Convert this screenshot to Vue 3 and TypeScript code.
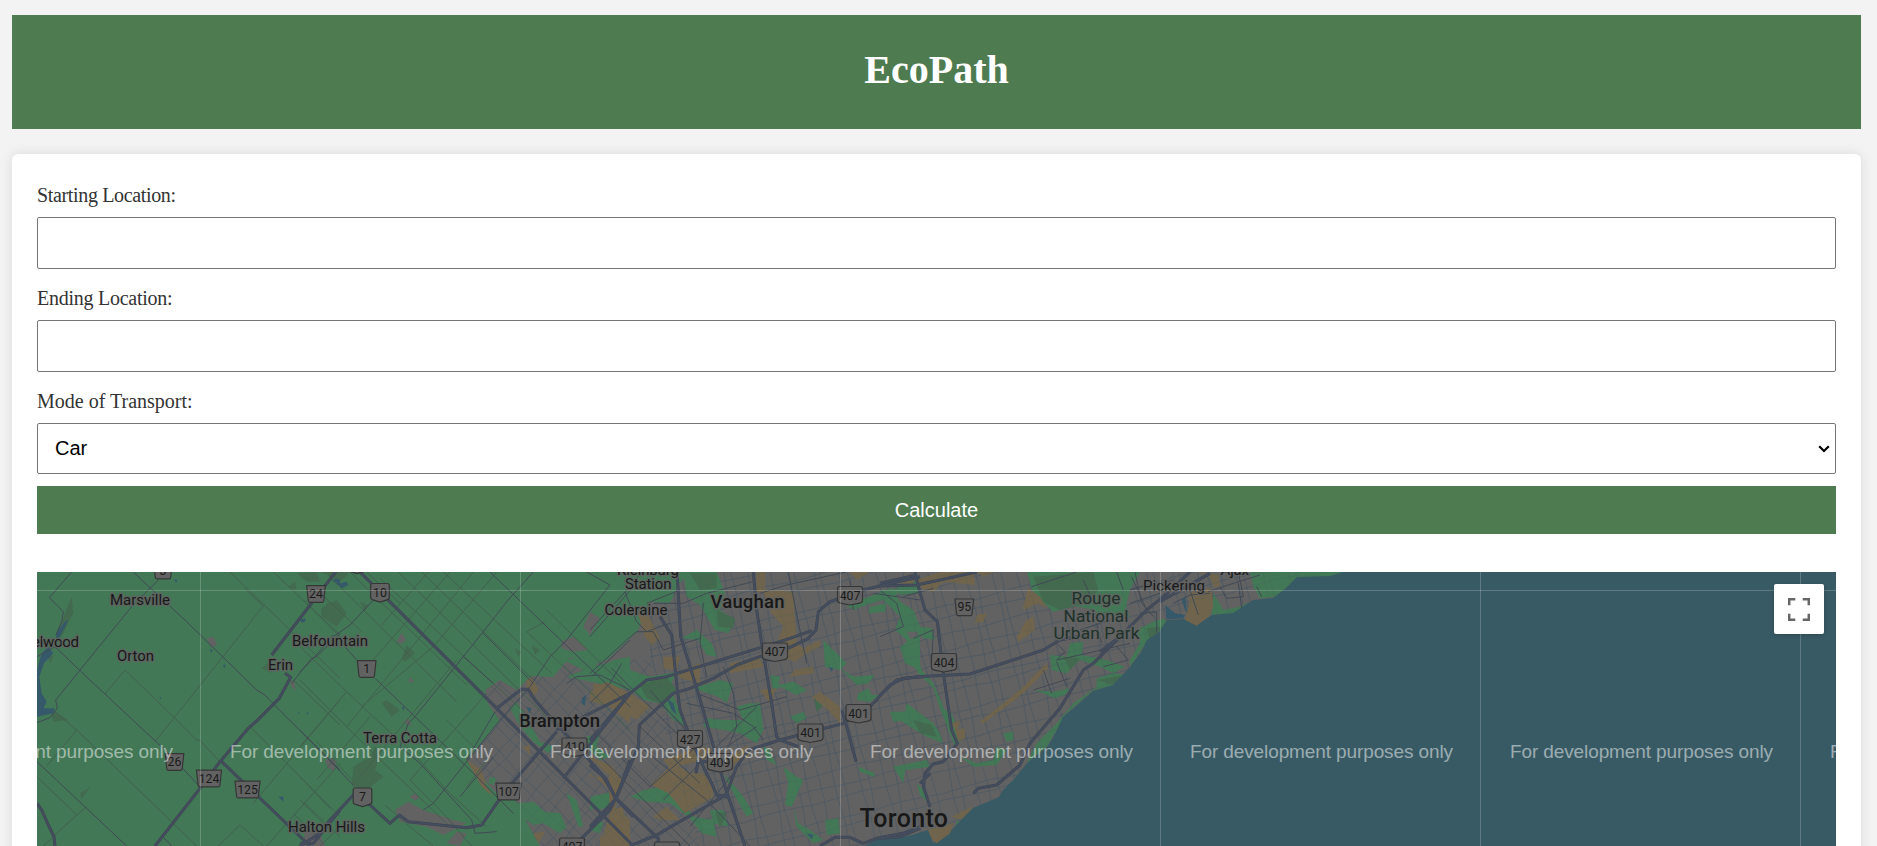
<script setup lang="ts">
import { ref } from 'vue'

type Sheet = 'a' | 'b' | 'c' | 'd' | 'e'
type Shape = [Sheet, string]

const start = ref('')
const end = ref('')
const mode = ref('Car')

// The map is drawn on five sheets at triple scale; each has its own origin.
const origins: Record<Sheet, [number, number]> = {
  a: [0, 400], b: [300, 560], c: [590, 560], d: [880, 560], e: [1130, 560],
}
const place = (s: Sheet) => `translate(${origins[s][0]} ${origins[s][1]}) scale(.33333)`

const urban = 'M467 760L500 721L487 702L485 690L500 680L517 690L531 676L553 677L570 657L593 665L607 660L637 632L650 602L670 603L678 585L690 572H1027L1032 590L1053 612L1075 606L1130 617L1119 586L1130 572H1300V846H540L528 825L515 800L495 792Z'
const water = 'M1343 572L1330 576L1297 577L1286 588L1273 598L1253 600L1233 613L1212 615L1197 625L1185 619L1167 620L1159 632L1147 640L1141 652L1130 667L1113 685L1093 691L1075 707L1063 717L1054 736L1047 747L1027 763L1015 778L1003 790L999 797L985 803L973 808L961 820L950 832L933 843L928 830L912 835L897 838L880 838L864 846H1836V572Z'

const parks: Shape[] = [
  ['b', 'M990 290L940 300L900 320L850 290L790 300L850 330L800 350L990 390Z'],
  ['b', 'M630 445L650 425L690 490L720 545L760 560L745 580L700 545L660 500ZM570 650L590 655L580 675L565 670ZM650 730L700 725L735 755L780 760L800 800L780 820L730 790L700 795L665 770ZM860 530L900 520L890 560L930 590L900 600L870 570ZM800 700L830 720L850 800L835 800ZM870 710L920 700L940 740L890 750Z'],
  ['c', 'M0 330L40 310L120 330L180 350L260 335L240 380L260 430L290 500L250 480L210 430L160 420L100 375L40 365Z'],
  ['c', 'M280 36H380L405 100L390 150L435 180L415 220L375 210L350 170L330 135L290 110ZM275 235L320 210L365 250L380 290L350 285L325 240ZM390 360L430 370L410 430L385 410L310 385ZM440 440L480 430L510 430L520 510L500 550L450 520L400 510L340 500L350 475L400 480L460 480ZM640 455L600 470L620 490L650 475Z'],
  ['c', 'M540 345L570 350L565 375L610 365L650 390L620 405L570 380L550 395ZM700 240L740 280L770 310L750 330L705 320ZM750 325L790 350L855 345L835 370L800 375L775 350ZM805 400L835 385L845 405L870 405L840 425L800 420ZM760 130L840 110L900 85L935 90L910 110L830 135L790 150ZM840 140L890 130L885 155L835 160ZM920 80L990 60V100L930 105ZM900 455L945 455L960 480L910 485ZM930 260L990 220V330L945 310Z'],
  ['c', 'M120 710L160 690L220 680L265 700L310 770L370 780L380 830L335 820L300 775L240 730L170 725ZM0 720L60 695L60 730L0 750ZM0 790L40 785L30 820L0 810ZM360 750L400 750L415 800L370 790ZM400 640L460 710L490 760L470 770L425 690ZM580 620L620 650L640 660L605 740L585 735L595 670ZM610 740L625 790L660 810L700 840L670 850L620 800ZM520 560L535 565L560 615L530 600ZM705 780L745 775L750 820L710 825ZM805 620L855 640L850 650L810 635Z'],
  ['d', 'M445 36H780L750 90L730 170L650 160L610 100L540 150L490 130L455 75Z'],
  ['d', 'M0 90L40 90L60 125L100 150L120 200L155 205L165 240L130 235L110 215L80 215L105 260L125 330L160 370L195 450L215 460L245 540L225 560L180 445L160 385L115 340L85 290L80 240L45 210L60 170L0 110ZM30 460L75 455L80 430L160 490L180 520L190 550L140 530L90 500ZM510 285L560 290L570 250L610 245L605 285L680 300L735 320L700 340L660 320L600 300L560 340L515 330ZM465 390L520 395L570 385L555 405L525 415ZM650 355L700 340L740 345L700 378L640 390L560 460L500 560L440 610L470 550L530 490L580 430L650 380ZM800 205L850 175L860 190L810 245ZM370 520L400 515L400 540L380 545ZM240 590L290 610L340 600L350 560L380 570L350 615L280 620ZM40 620L140 600L150 620L75 630L70 670ZM110 670L140 700L145 730L120 705ZM230 780L245 790L240 850L225 850Z'],
  ['e', 'M0 36H20L0 55ZM360 36H640L625 45L500 55L440 110L390 115L370 80ZM250 100L280 150L330 140L360 125L330 160L245 165ZM20 210L80 180L110 180L50 245L0 320V300L30 250Z'],
]
const woods: Shape[] = [
  ['a', 'M215 590L220 640L190 700L165 740L175 690L195 640ZM785 805L808 785L815 820ZM965 625L1010 600L1040 640L1010 680L965 650ZM890 520L950 516L960 545L920 545ZM865 560L885 545L890 570ZM240 1180L272 1160L245 1197ZM155 945L165 935L205 960L160 965ZM140 760L160 770L150 790Z'],
  ['b', 'M65 145L90 125L130 150L110 190L65 170ZM65 36H150L120 65ZM160 620L210 590L225 560L245 570L225 630L250 650L200 690L155 680ZM305 295L320 255L345 280L315 305ZM245 430L260 420L300 450L275 470ZM180 125L205 135L195 155ZM695 255L720 270L705 285ZM645 265L665 275L655 290Z'],
  ['c', 'M150 375L230 350L260 390L210 430L170 415ZM300 40H380V85L330 90ZM380 150L435 175L430 205L385 200ZM670 405L710 425L680 455ZM375 755L410 760L390 805Z'],
  ['d', 'M460 50L640 36L655 90L620 130L540 150L490 125ZM100 480L155 495L170 530L120 520ZM800 205L845 200L810 245ZM650 360L740 345L700 375ZM550 290L600 295L570 330Z'],
]
const tan: Shape[] = [
  ['b', 'M680 360L695 350L715 390L700 410L680 385ZM500 600L545 630L560 680L580 710L545 680ZM880 370L930 375L900 430L880 415ZM925 400L990 410V490L915 430ZM670 560L690 555L690 585ZM860 585L940 620L965 665L930 650ZM925 650L970 655L945 740L990 780V858H900L930 760ZM700 820L735 815L715 850Z'],
  ['c', 'M0 395L50 365L120 400L180 440L140 480L80 440L0 425ZM140 150L175 165L210 235L185 255L165 230ZM220 290L270 290L260 330L220 325ZM265 335L330 310L330 370L270 355ZM500 36H525V90L610 95L620 250L640 265L690 240L690 260L640 285L615 305L570 290L560 250L580 200L545 160L520 100L500 95ZM420 310L510 295L520 320L420 340ZM610 330L670 320L670 340L600 350ZM665 410L690 395L750 440L750 490L715 450ZM470 555L480 590L440 605L400 640L380 625ZM175 680L250 610L300 640L340 640L365 670L370 710L285 760L235 700L185 675ZM0 650L30 650L75 700L0 640ZM60 750L100 740L100 780L60 770ZM190 770L230 740L270 780L215 780ZM30 830L80 820L60 858H30Z'],
  ['c', 'M220 600L330 560L370 570L340 600L240 625ZM510 390L560 385L540 430ZM780 36H840L800 60ZM910 60L970 40V80Z'],
  ['d', 'M110 60L180 36H280L285 75L190 65L160 95L130 90ZM445 85L480 110L500 145L475 130L430 150L430 135ZM440 180L460 170L465 210L415 245L410 230ZM290 165L320 160L310 185L285 190ZM225 510L255 505L255 535L235 545ZM215 490L240 480L230 520ZM290 36H345L310 50ZM145 810L175 800L220 790L210 820L170 850L150 830ZM215 770L255 750L280 740L245 780ZM300 485L420 390L500 310L505 325L430 400L310 490Z'],
  ['e', 'M180 90L245 85L250 140L235 170L200 197L165 180L175 150ZM200 36L265 45L270 80L250 80L240 50Z'],
]
const town: Shape[] = [
  ['a', 'M620 715L640 710L652 735L635 742ZM870 838L885 850L886 872L875 860ZM975 1080L1000 1075L1005 1110L985 1105ZM915 1290L960 1295L975 1338H910Z'],
  ['b', 'M290 245L305 218L318 240L305 252ZM325 365L332 350L342 368ZM80 610L110 600L100 635ZM285 750L325 725L370 750L460 780L500 790L430 825L380 800L300 785ZM785 245L820 230L865 270L820 275L785 265ZM850 200L870 155L900 175L870 225ZM440 850L470 815L500 820L480 858ZM310 485L325 475L335 500ZM330 710L345 700L358 712L345 722Z'],
]
const ponds: Shape[] = [
  ['a', 'M111 810L125 760L145 740L160 760L132 790L118 830L125 880L140 905L130 925L165 925L160 940L111 950ZM168 700L195 665L205 660L185 700L170 725ZM900 655L918 660L905 668ZM522 538L533 540L528 548ZM668 798L677 792L674 804ZM835 1190L850 1190L850 1205ZM1000 540L1020 540V560ZM893 935L898 938L896 943ZM920 935L926 940L921 946ZM629 748L638 750L634 758ZM478 890L484 892L481 898Z'],
  ['b', 'M95 60L115 55L120 70L140 65L145 75L125 85ZM680 440L695 445L688 460ZM845 415L858 405L855 438L845 430ZM0 180L18 175L12 188ZM305 442L313 440L312 452Z'],
  ['c', 'M230 415L250 430L260 465L245 450ZM715 320L730 325L725 335ZM650 820L670 825L665 838Z'],
  ['e', 'M105 135L135 160L165 165L160 175L110 178ZM155 120L165 110L172 160L165 150Z'],
]
const lanes: Shape[] = [
  ['a', 'M690 516L1020 835M820 516L1020 705M790 618L465 1025M790 618L735 567M375 810L315 882M375 810L525 955L590 1020L600 1022L660 1085M165 935L230 990L590 1338M230 990L140 1098M111 1130L230 1245L260 1220M230 1245L130 1338M880 840L1020 975M750 980L1020 1250M1020 900L760 1210M720 1275L790 1338M720 1275L655 1338M910 1205L1020 1310M1020 1090L800 1338M880 1240L970 1330'],
  ['b', 'M295 36L780 510M365 36L700 360M430 36L755 340M240 55L320 130L720 500M150 36L500 375M85 45L190 150L470 425M40 80L185 215M10 120L125 235M450 36L180 345M385 36L245 195M520 36L140 500M590 36L400 260L185 440M470 300L180 650M560 400L330 660M0 260L140 395L305 550M0 360L200 560L450 800M140 395L0 560M210 470L50 660M50 545L185 690M0 650L90 745M310 550L450 700L560 800M440 480L560 600L500 680M200 36L300 130M680 215L735 185M330 660L430 760L515 858M0 720L80 800M120 800L60 858M680 215L990 510M740 150L990 395M255 735L330 800L400 858'],
]
const roads: Shape[] = [
  ['a', 'M215 516L148 593L190 635L185 665L168 705M400 516L450 563L560 665L770 870L795 885L850 942L1020 1110M475 540L395 620L167 900L172 925L150 953L111 968M165 740L240 812L500 1055L600 1160M111 1085L380 1338M1020 700L950 770L935 775L875 850M165 740L111 770M490 1312L515 1338'],
  ['b', 'M570 36L735 195L990 440M545 215L700 370M490 290L580 370M700 36L620 125L550 215L345 470L325 490L300 560L360 610L515 780L525 820L590 815M135 260L175 305M225 355L345 470L500 620L640 760M860 36L930 75L800 240L750 290L690 380L600 480L400 730L370 750M990 240L880 345M0 510L160 675M220 120L150 195L100 230M100 225L45 290L0 335M480 710L580 590M800 370L830 350L900 345L990 390M585 455L500 600'],
  ['c', 'M0 210L120 80L155 36M105 95L140 185L170 215L240 190M0 340L110 240L140 215L190 215L220 270L330 235M0 230L130 80M0 430L60 370L95 310M65 325L290 550M0 500L180 680L320 560M150 500L330 670M210 430L330 545M180 390L400 640M220 720L500 440M320 400L450 450L590 410M290 430L430 460L490 500L520 540M400 320L430 400L440 500L415 560M410 560L500 500M340 130L330 250L350 350M510 100L590 75L770 36M595 36L650 310M780 60L790 150M850 100L990 120M150 560L350 720L480 858M0 560L300 858M300 800L430 640M170 130L270 90M190 130L280 130L350 100L490 65'],
  ['d', 'M0 90L50 130L70 200L0 230M70 110L160 85M100 235L160 210L155 310M710 36L730 90M610 60L640 130M755 50L800 150L780 170M455 80L590 36M530 250L555 275L530 300L600 285L750 250M460 390L570 355M490 330L515 400M710 260L745 300L670 320M650 190L665 250M530 305L560 380M600 210L690 180M780 160L830 155L830 220'],
  ['e', 'M0 90L50 75M0 130L90 100M15 36L35 130L70 170M55 80L130 60M180 90L205 165M270 80L290 115L340 110L325 36M325 70L335 145M235 95L310 70L390 45M130 130L180 105L240 100M380 80L395 110'],
]
const majors: Shape[] = [
  ['a', 'M1010 512L815 765M855 820L872 832L838 895L775 958L745 985L660 1085L600 1165L465 1338M665 1085L930 1338M111 1210L125 1230L145 1275L162 1310L165 1338M1020 1230L940 1330H900'],
  ['b', 'M180 36L590 445L1000 858M590 445L665 388L685 388L705 420L740 460L850 580L920 660L947 715M990 600L965 670L947 715L930 750L830 850M947 715L1000 770M0 858L60 820L90 780L160 705L210 735L270 790L298 765L325 785L500 803L545 795L590 730L640 665L770 515M770 510L990 400M790 655L990 400'],
  ['c', 'M0 540L120 400L170 360L230 350L440 285L600 235L665 212M78 715L145 560L148 495L250 400L300 385L370 355L440 315L510 290L600 262L655 235L678 210L685 155L720 125L820 90L880 75L990 50M210 170L245 225L262 390L270 450L300 530L340 620L365 670L380 705L390 715M325 600L318 640M320 605H370M262 50L272 230L325 400L405 680L465 858M490 36L500 150L515 250L545 430L560 530L570 540L625 560M120 858L200 825L390 715L410 700L440 620L475 570L570 540L760 490L840 440L900 375L940 355L1000 350M380 705L420 712M78 715L205 835V858M0 800L78 715L40 650L0 615M755 450L770 500L798 605M690 858L735 832L780 832L820 850L860 835L940 820L990 800'],
  ['d', 'M105 36L115 80L135 150L172 185L190 340L215 510L232 550L190 605L160 612L135 640L130 680L150 740M0 405L50 360L110 350L270 342L430 290L490 270L540 240L620 225M0 78L110 75L290 36M0 70L110 45M280 700L295 685L350 675L420 615L450 550L540 445L610 330L640 310L700 250L800 150L850 110L930 36M660 275L720 230M840 125L990 40M0 835L60 830L120 805M150 640L120 670'],
]

// Local street meshes, one straight family of lines after another.
function mesh(cx: number, cy: number, angle: number, gap: number, reach: number): string {
  const t = (angle * Math.PI) / 180
  const ux = Math.cos(t), uy = Math.sin(t)
  let d = ''
  for (let k = -reach, i = 0; k < reach; k += gap, i++) {
    const j = k + Math.sin(i * 2.7) * gap * 0.22
    const ox = cx - uy * j, oy = cy + ux * j
    d += `M${(ox - ux * reach).toFixed(1)} ${(oy - uy * reach).toFixed(1)}`
    for (let s = -reach + 25, n = 0; s <= reach; s += 25, n++) {
      const w = Math.sin(n * 1.9 + i * 3.1) * 1.3
      d += `L${(ox + ux * s - uy * w).toFixed(1)} ${(oy + uy * s + ux * w).toFixed(1)}`
    }
  }
  return d
}
const torontoStreets = mesh(950, 700, -14, 15, 380) + mesh(950, 700, 77, 12.5, 380)
const peelStreets = mesh(560, 770, 45, 12, 200) + mesh(560, 770, -48, 14, 200)

interface Label { t: string; x: number; y: number; w: number; s: number; k?: string }
const labels: Label[] = [
  { t: 'Marsville', x: 110, y: 604.5, w: 60, s: 15 },
  { t: 'elwood', x: 32, y: 647, w: 47, s: 15 },
  { t: 'Orton', x: 117, y: 661.3, w: 37, s: 15 },
  { t: 'Belfountain', x: 292, y: 646.4, w: 76, s: 15 },
  { t: 'Erin', x: 268, y: 670, w: 25, s: 15 },
  { t: 'Terra Cotta', x: 363, y: 743.4, w: 74, s: 15 },
  { t: 'Halton Hills', x: 288, y: 832, w: 77, s: 15 },
  { t: 'Brampton', x: 519, y: 727, w: 81, s: 18.5, k: 'city' },
  { t: 'Vaughan', x: 710.5, y: 607.6, w: 74, s: 18.5, k: 'city' },
  { t: 'Coleraine', x: 604.5, y: 615.4, w: 63, s: 15 },
  { t: 'Kleinburg', x: 617, y: 574.5, w: 62, s: 15 },
  { t: 'Station', x: 625, y: 589.3, w: 46.5, s: 15 },
  { t: 'Toronto', x: 859.5, y: 827.3, w: 88.5, s: 25, k: 'city' },
  { t: 'Rouge', x: 1071.5, y: 604.4, w: 49, s: 17.3, k: 'park' },
  { t: 'National', x: 1063.5, y: 621.5, w: 65, s: 17.3, k: 'park' },
  { t: 'Urban Park', x: 1053.5, y: 639, w: 86, s: 17.3, k: 'park' },
  { t: 'Pickering', x: 1143, y: 591, w: 62, s: 15 },
  { t: 'Ajax', x: 1220.5, y: 575, w: 28.5, s: 15 },
]
const shields: [string, number, number, boolean][] = [
  ['3', 163, 570.5, false], ['24', 316, 594, false], ['26', 174.5, 762, false], ['124', 209, 778.5, false],
  ['125', 247.5, 789.5, false], ['1', 366.7, 669, false], ['10', 380, 592.5, true], ['', 357, 564, true], ['7', 362.5, 797, true],
  ['107', 508.5, 791.5, false], ['410', 574.5, 747, true], ['407', 572, 847, true], ['407', 667, 851, true],
  ['407', 850, 595.5, true], ['407', 775, 652, true], ['401', 810.5, 733, true], ['401', 858.5, 713.5, true],
  ['427', 690, 739.5, true], ['409', 720, 762.5, true], ['95', 964.3, 607.3, false], ['404', 944, 662.5, true],
]
function shieldPath(text: string, round: boolean): string {
  const w = text.length > 2 ? 12.5 : 9.3
  return round
    ? `M${-w} -7Q${-w} -9 ${2 - w} -9H${w - 2}Q${w} -9 ${w} -7V5Q${w} 7 ${w - 3} 7.6L0 9.5L${3 - w} 7.6Q${-w} 7 ${-w} 5Z`
    : `M${-w} -8.3H${w}L${w - 1.6} 7Q${w - 1.8} 8.3 ${w - 3} 8.3H${3 - w}Q${1.8 - w} 8.3 ${1.6 - w} 7Z`
}
const tiles = [-120, 200, 520, 840, 1160, 1480, 1800]
const areas = [
  { cls: 'town', items: town }, { cls: 'parks', items: parks }, { cls: 'woods', items: woods },
  { cls: 'tan', items: tan }, { cls: 'ponds', items: ponds },
]
const lines = [
  { cls: 'lanes', items: lanes }, { cls: 'roads', items: roads },
  { cls: 'casing', items: majors }, { cls: 'majors', items: majors },
]
</script>

<template>
  <div class="page">
    <header class="banner"><h1>EcoPath</h1></header>
    <main class="card">
      <label for="start"><span>Starting Location:</span></label>
      <input id="start" v-model="start" type="text" />
      <label for="end"><span class="mid">Ending Location:</span></label>
      <input id="end" v-model="end" type="text" />
      <label for="mode"><span class="wide">Mode of Transport:</span></label>
      <div class="select">
        <select id="mode" v-model="mode"><option>Car</option></select>
        <svg class="chevron" viewBox="0 0 12 8"><path d="M1.2 1.3L6 6L10.8 1.3" /></svg>
      </div>
      <button class="calculate" type="button">Calculate</button>
      <div class="map">
        <svg class="canvas" viewBox="37 572 1799 274">
          <defs>
            <clipPath id="land"><path :d="urban" /></clipPath>
            <clipPath id="west"><path d="M440 660H650L700 846H440Z" /></clipPath>
            <clipPath id="east"><path d="M650 572H1300V846H700L650 680Z" /></clipPath>
          </defs>
          <rect class="ground" x="37" y="572" width="1799" height="274" />
          <path class="urban" :d="urban" />
          <g clip-path="url(#land)">
            <g clip-path="url(#west)"><path class="streets" :d="peelStreets" /></g>
            <g clip-path="url(#east)"><path class="streets" :d="torontoStreets" /></g>
          </g>
          <g v-for="a in areas" :key="a.cls" :class="a.cls">
            <path v-for="([s, d], i) in a.items" :key="i" :d="d" :transform="place(s)" />
          </g>
          <g clip-path="url(#land)">
            <path class="streets faint" clip-path="url(#west)" :d="peelStreets" />
            <path class="streets faint" clip-path="url(#east)" :d="torontoStreets" />
          </g>
          <path class="lake" :d="water" />
          <g class="tan"><path :transform="place('e')" d="M180 130L245 110L250 140L235 170L200 197L165 180Z" /><path :transform="place('d')" d="M145 810L220 790L210 820L170 850L160 840Z" /></g>
          <g v-for="l in lines" :key="l.cls" :class="l.cls">
            <path v-for="([s, d], i) in l.items" :key="i" :d="d" :transform="place(s)" />
          </g>
          <g v-for="([t, x, y, r], i) in shields" :key="i" class="shield" :transform="`translate(${x} ${y})`">
            <path :d="shieldPath(t, r)" />
            <text y="4.1">{{ t }}</text>
          </g>
          <text v-for="l in labels" :key="l.t" class="label" :class="l.k" :x="l.x" :y="l.y" :font-size="l.s" :textLength="l.w">{{ l.t }}</text>
          <path class="tile" d="M37 590.5H1836M200.5 572V846M520.5 572V846M840.5 572V846M1160.5 572V846M1480.5 572V846M1800.5 572V846" />
          <text v-for="x in tiles" :key="x" class="mark" :x="x + 30" y="757.5" textLength="263">For development purposes only</text>
        </svg>
        <button class="fullscreen" type="button" aria-label="Toggle fullscreen view">
          <svg viewBox="0 0 22 23"><path d="M1.2 7.3V1.2H7.3M14.7 1.2H20.8V7.3M20.8 15.7V21.8H14.7M7.3 21.8H1.2V15.7" /></svg>
        </button>
      </div>
    </main>
  </div>
</template>

<style>
html, body { height: 846px; overflow: hidden; background: #f3f3f3; }
</style>

<style scoped>
.page { height: 846px; padding: 15px 16px 0 12px; box-sizing: border-box; overflow: hidden; font-family: "Liberation Serif", serif; color: #333; }
.banner { height: 114px; background: #4e7b50; display: flex; justify-content: center; box-sizing: border-box; padding-top: 32px; }
h1 { margin: 0; color: #fff; font-size: 40px; line-height: 46px; font-weight: 700; }
.card { margin-top: 25px; height: 760px; box-sizing: border-box; padding: 25px; background: #fff; border-radius: 6px; box-shadow: 0 0 13px rgba(0, 0, 0, .1); display: flex; flex-direction: column; }
label { height: 38px; flex: none; font-size: 20px; line-height: 33px; }
label span { letter-spacing: -.35px; }
label .mid { letter-spacing: -.25px; }
label .wide { letter-spacing: 0; }
input { height: 52px; flex: none; box-sizing: border-box; width: 100%; margin: 0 0 13px; border: 1px solid #767676; border-radius: 2px; background: #fff; padding: 12px 18px; font: 20px "Liberation Sans", sans-serif; outline: none; }
.select { height: 51px; flex: none; display: grid; align-items: center; margin-bottom: 12px; }
select { grid-area: 1 / 1; appearance: none; height: 51px; width: 100%; margin: 0; border: 1px solid #767676; border-radius: 2px; background: #fff; padding: 0 18px 2px 17px; font: 20px "Liberation Sans", sans-serif; color: #000; }
.chevron { grid-area: 1 / 1; justify-self: end; margin-right: 6px; width: 12px; height: 8px; pointer-events: none; }
.chevron path { fill: none; stroke: #000; stroke-width: 2.2; }
.calculate { height: 48px; flex: none; border: 0; margin: 0 0 38px; padding: 0; background: #4e7b50; color: #fff; font: 20px "Liberation Sans", sans-serif; }
.map { position: relative; height: 274px; flex: none; overflow: hidden; }
.canvas { display: block; width: 100%; height: 274px; }
.ground { fill: #427856; }
.urban, .town { fill: #626262; }
.parks { fill: #427856; }
.woods { fill: #436a4f; }
.tan { fill: #70654c; }
.ponds { fill: #35596a; }
.lake { fill: #385a64; }
.streets { fill: none; stroke: #4c5966; stroke-width: .9; opacity: .7; }
.streets.faint { opacity: .2; }
.lanes, .roads, .casing, .majors { fill: none; stroke-linejoin: round; }
.lanes { stroke: #42604f; stroke-width: 3; }
.roads { stroke: #414955; stroke-width: 3; }
.casing { stroke: #3e4450; stroke-width: 9; }
.majors { stroke: #444d5e; stroke-width: 6; }
.tile { fill: none; stroke: rgba(255, 255, 255, .2); }
.shield path { fill: #626262; stroke: #363636; stroke-width: 1.2; }
.shield text { font: 400 12.3px Roboto, sans-serif; fill: #1b1b1b; text-anchor: middle; }
.label { font-family: Roboto, sans-serif; fill: #181818; stroke: rgba(98, 98, 98, .8); stroke-width: 3px; stroke-linejoin: round; paint-order: stroke; }
.city { font-weight: 500; }
.park { fill: #1d3129; }
.mark { font: 19px "Liberation Sans", sans-serif; fill: rgba(255, 255, 255, .5); }
.fullscreen { position: absolute; top: 12px; right: 12px; width: 50px; height: 50px; padding: 0; border: 0; border-radius: 2px; background: #fff; display: flex; align-items: center; justify-content: center; box-shadow: 0 1px 5px -1px rgba(0, 0, 0, .3); }
.fullscreen svg { width: 22px; height: 23px; }
.fullscreen path { fill: none; stroke: #666; stroke-width: 2.5; }
</style>
